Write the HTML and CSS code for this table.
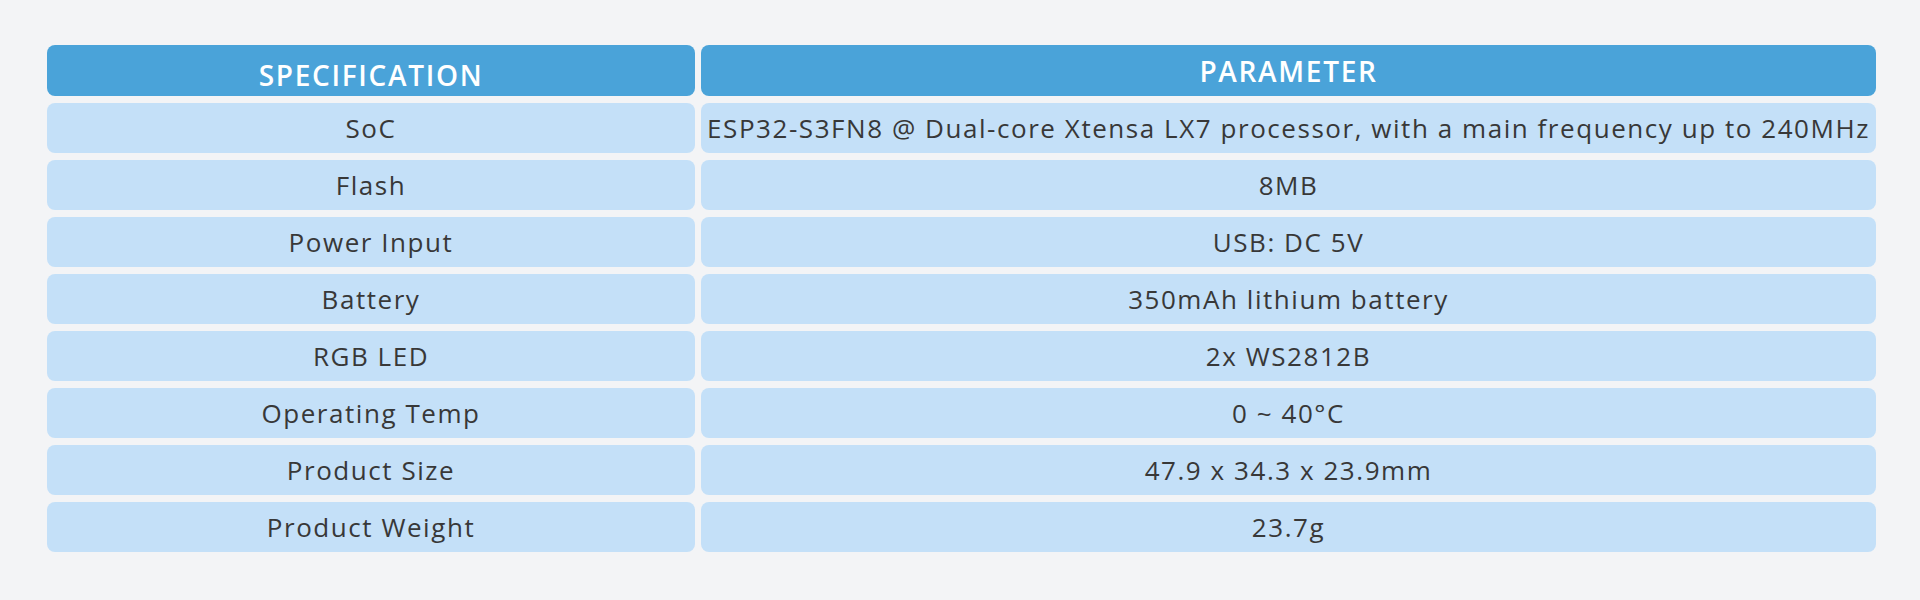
FILE: index.html
```html
<!DOCTYPE html>
<html lang="en">
<head>
<meta charset="utf-8">
<title>Specifications</title>
<link rel="stylesheet" href="styles.css">
</head>
<body>
<main class="page">
  <div class="spec-table">
    <div class="cell head head-spec">SPECIFICATION</div>
    <div class="cell head">PARAMETER</div>

    <div class="cell">SoC</div>
    <div class="cell">ESP32-S3FN8 @ Dual-core Xtensa LX7 processor, with a main frequency up to 240MHz</div>

    <div class="cell">Flash</div>
    <div class="cell">8MB</div>

    <div class="cell">Power Input</div>
    <div class="cell">USB: DC 5V</div>

    <div class="cell">Battery</div>
    <div class="cell">350mAh lithium battery</div>

    <div class="cell">RGB LED</div>
    <div class="cell">2x WS2812B</div>

    <div class="cell">Operating Temp</div>
    <div class="cell">0 ~ 40°C</div>

    <div class="cell">Product Size</div>
    <div class="cell">47.9 x 34.3 x 23.9mm</div>

    <div class="cell">Product Weight</div>
    <div class="cell">23.7g</div>
  </div>
</main>
</body>
</html>
```

FILE: styles.css
```css
html, body {
  margin: 0;
  padding: 0;
}

body {
  width: 1920px;
  height: 600px;
  background: #f3f4f6;
  font-family: "Open Sans", "Noto Sans", sans-serif;
  color: #383838;
  overflow: hidden;
}

.page {
  padding: 45px 0 0 47px;
}

.spec-table {
  display: grid;
  grid-template-columns: 648px 1175px;
  grid-template-rows: 51px repeat(8, 50px);
  column-gap: 6px;
  row-gap: 7px;
}

.cell {
  display: flex;
  align-items: center;
  justify-content: center;
  background: #c4e0f8;
  border-radius: 8px;
  font-size: 26px;
  font-weight: 400;
  letter-spacing: 1.55px;
  white-space: nowrap;
}

.head {
  background: #4aa3d9;
  color: #ffffff;
  font-weight: 600;
  font-size: 28px;
  letter-spacing: 1.7px;
}

.head-spec {
  padding-top: 9px;
  box-sizing: border-box;
}
```
